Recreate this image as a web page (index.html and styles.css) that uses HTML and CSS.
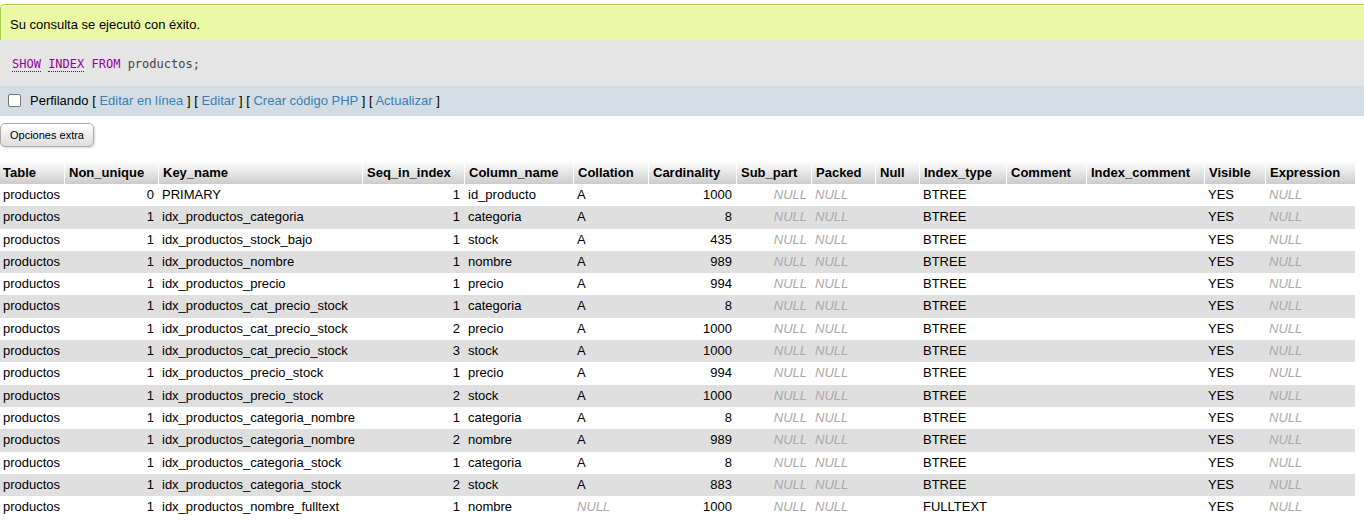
FILE: index.html
```html
<!DOCTYPE html>
<html lang="es">
<head>
<meta charset="utf-8">
<title>SHOW INDEX</title>
<link rel="stylesheet" href="styles.css">
</head>
<body>
<div class="success">Su consulta se ejecutó con éxito.</div>
<div class="sql"><code><span class="kw u">SHOW</span> <span class="kw u">INDEX</span> <span class="kw">FROM</span> <span class="id">productos</span>;</code></div>
<div class="toolbar">
  <span class="cb"></span><span class="prof">Perfilando</span>
  <span class="br">[</span> <a href="#">Editar en línea</a> <span class="br">]</span>
  <span class="br">[</span> <a href="#">Editar</a> <span class="br">]</span>
  <span class="br">[</span> <a href="#">Crear código PHP</a> <span class="br">]</span>
  <span class="br">[</span> <a href="#">Actualizar</a> <span class="br">]</span>
</div>
<div class="opts"><button class="btn">Opciones extra</button></div>
<table class="data">
<colgroup>
<col style="width:64px"><col style="width:94px"><col style="width:204px"><col style="width:102px"><col style="width:109px"><col style="width:75px"><col style="width:88px"><col style="width:75px"><col style="width:64px"><col style="width:44px"><col style="width:87px"><col style="width:80px"><col style="width:118px"><col style="width:61px"><col style="width:90px">
</colgroup>
<thead>
<tr><th>Table</th><th>Non_unique</th><th>Key_name</th><th>Seq_in_index</th><th>Column_name</th><th>Collation</th><th>Cardinality</th><th>Sub_part</th><th>Packed</th><th>Null</th><th>Index_type</th><th>Comment</th><th>Index_comment</th><th>Visible</th><th>Expression</th></tr>
</thead>
<tbody>
<tr><td>productos</td><td class="r">0</td><td>PRIMARY</td><td class="r">1</td><td>id_producto</td><td>A</td><td class="r">1000</td><td class="r n">NULL</td><td class="n">NULL</td><td></td><td>BTREE</td><td></td><td></td><td>YES</td><td class="n">NULL</td></tr>
<tr><td>productos</td><td class="r">1</td><td>idx_productos_categoria</td><td class="r">1</td><td>categoria</td><td>A</td><td class="r">8</td><td class="r n">NULL</td><td class="n">NULL</td><td></td><td>BTREE</td><td></td><td></td><td>YES</td><td class="n">NULL</td></tr>
<tr><td>productos</td><td class="r">1</td><td>idx_productos_stock_bajo</td><td class="r">1</td><td>stock</td><td>A</td><td class="r">435</td><td class="r n">NULL</td><td class="n">NULL</td><td></td><td>BTREE</td><td></td><td></td><td>YES</td><td class="n">NULL</td></tr>
<tr><td>productos</td><td class="r">1</td><td>idx_productos_nombre</td><td class="r">1</td><td>nombre</td><td>A</td><td class="r">989</td><td class="r n">NULL</td><td class="n">NULL</td><td></td><td>BTREE</td><td></td><td></td><td>YES</td><td class="n">NULL</td></tr>
<tr><td>productos</td><td class="r">1</td><td>idx_productos_precio</td><td class="r">1</td><td>precio</td><td>A</td><td class="r">994</td><td class="r n">NULL</td><td class="n">NULL</td><td></td><td>BTREE</td><td></td><td></td><td>YES</td><td class="n">NULL</td></tr>
<tr><td>productos</td><td class="r">1</td><td>idx_productos_cat_precio_stock</td><td class="r">1</td><td>categoria</td><td>A</td><td class="r">8</td><td class="r n">NULL</td><td class="n">NULL</td><td></td><td>BTREE</td><td></td><td></td><td>YES</td><td class="n">NULL</td></tr>
<tr><td>productos</td><td class="r">1</td><td>idx_productos_cat_precio_stock</td><td class="r">2</td><td>precio</td><td>A</td><td class="r">1000</td><td class="r n">NULL</td><td class="n">NULL</td><td></td><td>BTREE</td><td></td><td></td><td>YES</td><td class="n">NULL</td></tr>
<tr><td>productos</td><td class="r">1</td><td>idx_productos_cat_precio_stock</td><td class="r">3</td><td>stock</td><td>A</td><td class="r">1000</td><td class="r n">NULL</td><td class="n">NULL</td><td></td><td>BTREE</td><td></td><td></td><td>YES</td><td class="n">NULL</td></tr>
<tr><td>productos</td><td class="r">1</td><td>idx_productos_precio_stock</td><td class="r">1</td><td>precio</td><td>A</td><td class="r">994</td><td class="r n">NULL</td><td class="n">NULL</td><td></td><td>BTREE</td><td></td><td></td><td>YES</td><td class="n">NULL</td></tr>
<tr><td>productos</td><td class="r">1</td><td>idx_productos_precio_stock</td><td class="r">2</td><td>stock</td><td>A</td><td class="r">1000</td><td class="r n">NULL</td><td class="n">NULL</td><td></td><td>BTREE</td><td></td><td></td><td>YES</td><td class="n">NULL</td></tr>
<tr><td>productos</td><td class="r">1</td><td>idx_productos_categoria_nombre</td><td class="r">1</td><td>categoria</td><td>A</td><td class="r">8</td><td class="r n">NULL</td><td class="n">NULL</td><td></td><td>BTREE</td><td></td><td></td><td>YES</td><td class="n">NULL</td></tr>
<tr><td>productos</td><td class="r">1</td><td>idx_productos_categoria_nombre</td><td class="r">2</td><td>nombre</td><td>A</td><td class="r">989</td><td class="r n">NULL</td><td class="n">NULL</td><td></td><td>BTREE</td><td></td><td></td><td>YES</td><td class="n">NULL</td></tr>
<tr><td>productos</td><td class="r">1</td><td>idx_productos_categoria_stock</td><td class="r">1</td><td>categoria</td><td>A</td><td class="r">8</td><td class="r n">NULL</td><td class="n">NULL</td><td></td><td>BTREE</td><td></td><td></td><td>YES</td><td class="n">NULL</td></tr>
<tr><td>productos</td><td class="r">1</td><td>idx_productos_categoria_stock</td><td class="r">2</td><td>stock</td><td>A</td><td class="r">883</td><td class="r n">NULL</td><td class="n">NULL</td><td></td><td>BTREE</td><td></td><td></td><td>YES</td><td class="n">NULL</td></tr>
<tr><td>productos</td><td class="r">1</td><td>idx_productos_nombre_fulltext</td><td class="r">1</td><td>nombre</td><td class="n">NULL</td><td class="r">1000</td><td class="r n">NULL</td><td class="n">NULL</td><td></td><td>FULLTEXT</td><td></td><td></td><td>YES</td><td class="n">NULL</td></tr>
</tbody>
</table>
</body>
</html>
```

FILE: styles.css
```css
html, body {
  margin: 0;
  padding: 0;
  background: #fff;
}
body {
  font-family: "Liberation Sans", Arial, sans-serif;
  font-size: 13px;
  color: #000;
  overflow: hidden;
}
.success {
  margin-top: 4px;
  box-sizing: border-box;
  height: 36px;
  border-top: 1px solid #a2d246;
  border-left: 1px solid #a2d246;
  border-top-left-radius: 5px;
  background: #ebf8a4;
  box-shadow: inset 0 1px 0 #fff;
  padding: 12px 0 0 9px;
  line-height: 16px;
}
.sql {
  background: #e5e5e5;
  height: 46px;
  box-sizing: border-box;
  padding: 16px 0 0 12px;
}
.sql code {
  font-family: "DejaVu Sans Mono", "Liberation Mono", monospace;
  font-size: 12px;
  line-height: 16px;
  color: #444;
}
.kw { color: #909; }
.u {
  border-bottom: 1px dotted #333;
}
.id { color: #444; }
.toolbar {
  background: #d3dce3;
  height: 30px;
  box-sizing: border-box;
  padding: 6px 0 0 8px;
  line-height: 17px;
  color: #000;
}
.toolbar a {
  color: #3a7eb5;
  text-decoration: none;
}
.cb {
  display: inline-block;
  vertical-align: middle;
  width: 11px;
  height: 11px;
  border: 1px solid #767676;
  border-radius: 2px;
  background: #fff;
  margin: -3px 9px 0 0;
}
.br { color: #000; }
.opts {
  padding-top: 7px;
  height: 31px;
}
.btn {
  margin: 0;
  height: 24px;
  width: 94px;
  padding: 0 6px;
  font-family: "Liberation Sans", Arial, sans-serif;
  font-size: 11px;
  color: #000;
  border: 1px solid #aaa;
  border-radius: 5px;
  background: linear-gradient(#fff, #ddd);
  box-shadow: 1px 1px 2px rgba(0,0,0,0.15);
}
table.data {
  margin-top: 7px;
  border-collapse: separate;
  border-spacing: 0;
  table-layout: fixed;
  width: 1355px;
}
table.data th {
  text-align: left;
  font-weight: bold;
  padding: 3px 4px 3px 4px;
  line-height: 17px;
  background: linear-gradient(#fff, #ccc);
  border-left: 1px solid #fff;
  white-space: nowrap;
  overflow: hidden;
  color: #000;
}
table.data th:first-child { border-left: 0; padding-left: 3px; }
table.data td {
  padding: 3px 4px 3px 4px;
  line-height: 16.3px;
  white-space: nowrap;
  overflow: hidden;
  color: #000;
}
table.data td:first-child { padding-left: 3px; }
table.data tbody tr:nth-child(even) td { background: #dfdfdf; }
table.data td.r { text-align: right; }
table.data td.n {
  font-style: italic;
  color: #aaa;
}
```
